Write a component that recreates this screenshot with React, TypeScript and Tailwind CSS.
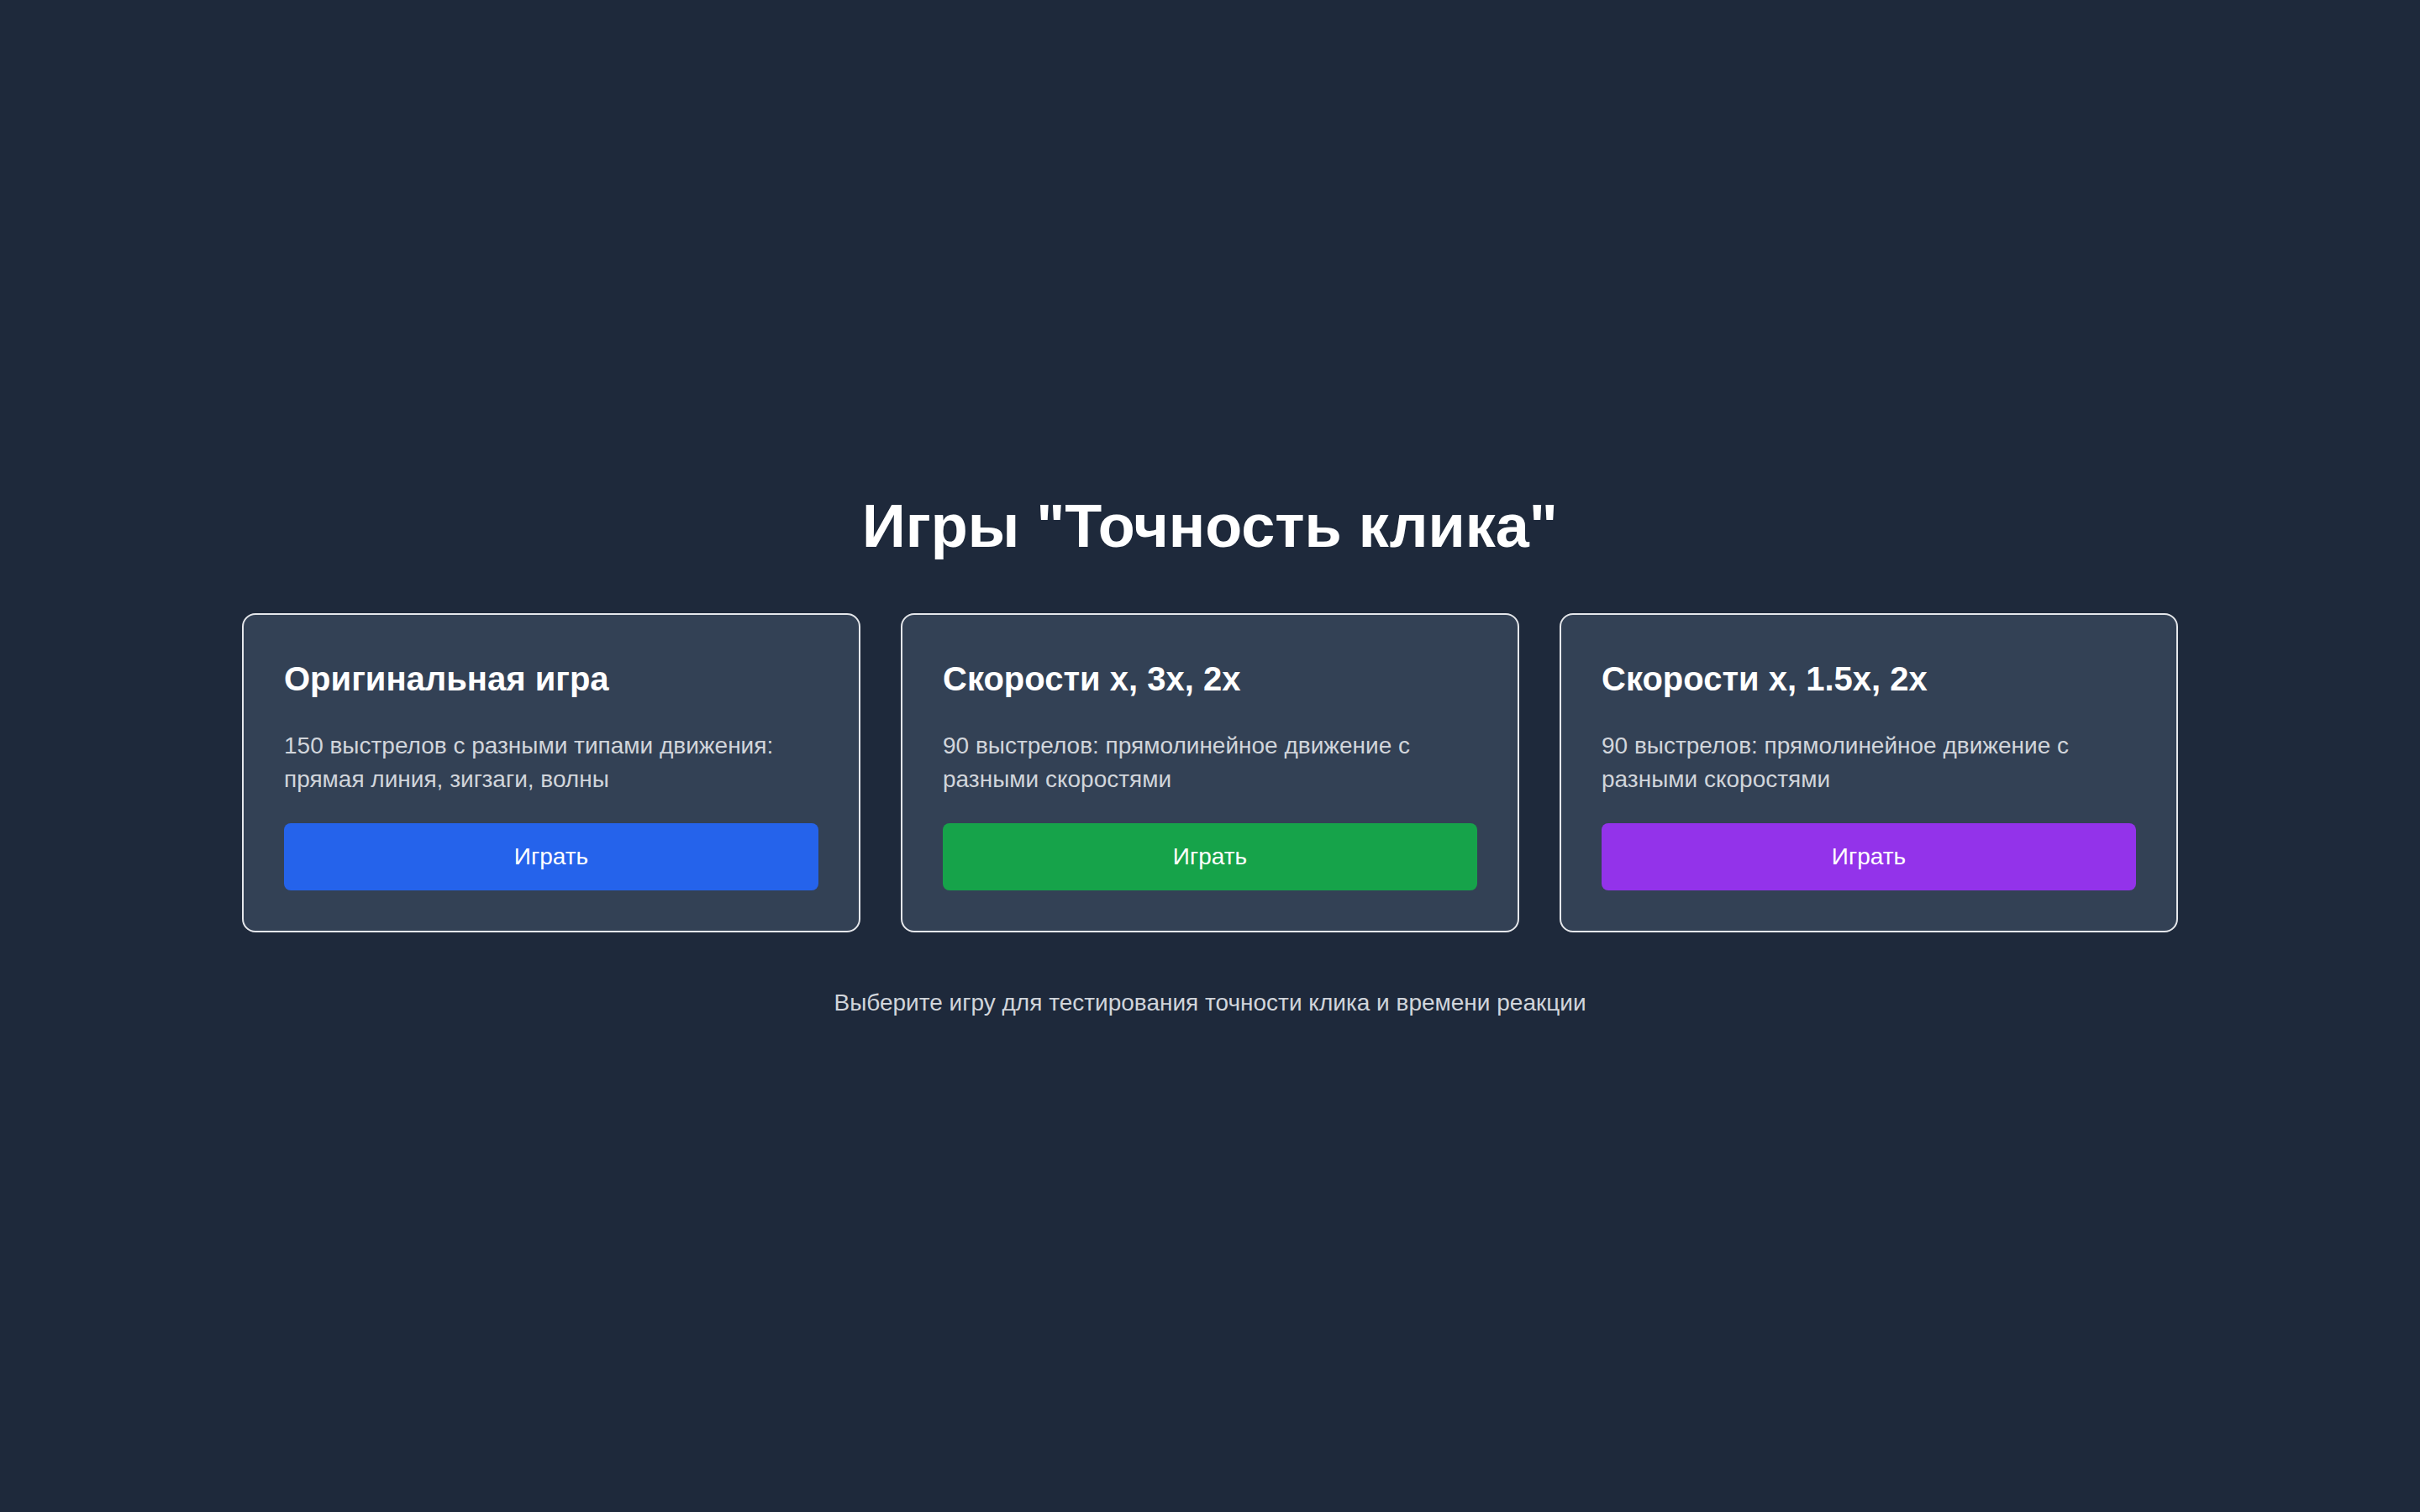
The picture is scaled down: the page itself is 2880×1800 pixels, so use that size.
type Game = {
  title: string;
  description: string;
  button: string;
};

const games: Game[] = [
  {
    title: 'Оригинальная игра',
    description: '150 выстрелов с разными типами движения: прямая линия, зигзаги, волны',
    button: 'bg-[#2563eb] hover:bg-[#1d4ed8]',
  },
  {
    title: 'Скорости x, 3x, 2x',
    description: '90 выстрелов: прямолинейное движение с разными скоростями',
    button: 'bg-[#16a34a] hover:bg-[#15803d]',
  },
  {
    title: 'Скорости x, 1.5x, 2x',
    description: '90 выстрелов: прямолинейное движение с разными скоростями',
    button: 'bg-[#9333ea] hover:bg-[#7e22ce]',
  },
];

function GameCard({ game }: { game: Game }) {
  return (
    <div className="flex flex-col rounded-2xl border-2 border-[#e5e7eb] bg-[#334155] p-12">
      <h2 className="mb-8 text-[40px] leading-[56px] font-bold text-white">{game.title}</h2>
      <p className="mb-8 text-[28px] leading-[40px] text-[#d1d5db]">{game.description}</p>
      <button
        type="button"
        className={`w-full rounded-lg py-5 text-[28px] leading-[40px] text-white transition-colors ${game.button}`}
      >
        Играть
      </button>
    </div>
  );
}

export default function App() {
  return (
    <div
      className="flex min-h-screen items-center justify-center bg-[#1e293b] text-white"
      style={{ fontFamily: '"Liberation Sans", Arial, sans-serif' }}
    >
      <div className="w-full max-w-[2304px]">
        <h1 className="mb-16 text-center text-[72px] leading-[80px] font-bold">
          Игры &quot;Точность клика&quot;
        </h1>
        <div className="grid grid-cols-3 gap-12">
          {games.map((game) => (
            <GameCard key={game.title} game={game} />
          ))}
        </div>
        <p className="mt-16 text-center text-[28px] leading-[40px] text-[#d1d5db]">
          Выберите игру для тестирования точности клика и времени реакции
        </p>
      </div>
    </div>
  );
}
